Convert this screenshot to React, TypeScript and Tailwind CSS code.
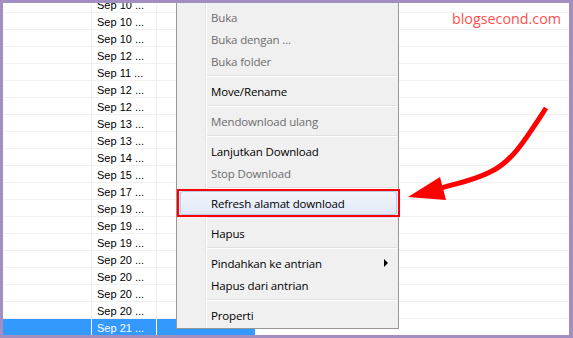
import React from "react";

const dates = [
  "Sep 10", "Sep 10", "Sep 10", "Sep 12", "Sep 11", "Sep 12", "Sep 12",
  "Sep 13", "Sep 13", "Sep 14", "Sep 15", "Sep 17", "Sep 19", "Sep 19",
  "Sep 19", "Sep 20", "Sep 20", "Sep 20", "Sep 20", "Sep 21",
];

type Entry =
  | { kind: "item"; label: string; disabled?: boolean; sub?: boolean; hot?: boolean }
  | { kind: "sep" };

const menu: Entry[] = [
  { kind: "item", label: "Buka", disabled: true },
  { kind: "item", label: "Buka dengan ...", disabled: true },
  { kind: "item", label: "Buka folder", disabled: true },
  { kind: "sep" },
  { kind: "item", label: "Move/Rename" },
  { kind: "sep" },
  { kind: "item", label: "Mendownload ulang", disabled: true },
  { kind: "sep" },
  { kind: "item", label: "Lanjutkan Download" },
  { kind: "item", label: "Stop Download", disabled: true },
  { kind: "sep" },
  { kind: "item", label: "Refresh alamat download", hot: true },
  { kind: "sep" },
  { kind: "item", label: "Hapus" },
  { kind: "sep" },
  { kind: "item", label: "Pindahkan ke antrian", sub: true },
  { kind: "item", label: "Hapus dari antrian" },
  { kind: "sep" },
  { kind: "item", label: "Properti" },
];

export default function App() {
  return (
    <div className="w-[573px] h-[338px] bg-[#a28ec0] pt-[3px] pl-[3px]">
      <div className="relative w-[566px] h-[332px] bg-white overflow-hidden">
        {/* list */}
        <div className="-mt-[7px] font-['Liberation_Sans',sans-serif] text-[11px]">
          {dates.map((d, i) => {
            const sel = i === dates.length - 1;
            return (
              <div key={i} className="flex h-[17px] border-b border-[#f0f0f0]">
                <div
                  className={`w-[89px] border-r ${sel ? "bg-[#3399ff] border-white" : "border-[#f0f0f0]"}`}
                />
                <div
                  className={`w-[65px] border-r pl-[5px] leading-[18px] ${sel ? "bg-[#3399ff] border-white text-white" : "border-[#f0f0f0] text-black"}`}
                >
                  {d} ...
                </div>
                <div className={`w-[98px] ${sel ? "bg-[#3399ff]" : ""}`} />
              </div>
            );
          })}
        </div>

        {/* watermark */}
        <div className="absolute left-[449px] top-[6px] font-['Open_Sans',sans-serif] text-[14.3px] leading-[20px] text-[#ff4f4f]">
          blogsecond.com
        </div>

        {/* context menu */}
        <div className="absolute left-[173px] top-[-1px] w-[223px] h-[327px] border border-[#979797] bg-[#f0f0f0] pt-[3px] font-['Open_Sans',sans-serif] text-[11.5px] tracking-[-0.15px]">
          <div className="absolute left-[28px] top-0 bottom-0 w-px bg-[#e2e3e3]" />
          <div className="absolute left-[29px] top-0 bottom-0 w-px bg-white" />
          {menu.map((e, i) =>
            e.kind === "sep" ? (
              <div key={i} className="relative h-[8px] flex flex-col justify-center pl-[30px] pr-[1px]">
                <div className="h-px bg-[#e0e0e0]" />
                <div className="h-px bg-white" />
              </div>
            ) : (
              <div key={i} className="relative h-[22px]">
                {e.hot && (
                  <>
                    <div className="absolute left-[3px] right-[1px] top-[-1px] bottom-[-1px] rounded-[3px] border border-[#b4cef0] bg-gradient-to-b from-[#f1f5fb] to-[#e2eaf6]" />
                    <div className="absolute left-0 w-[223px] top-[-3px] h-[28px] border-2 border-[#ff0000]" />
                  </>
                )}
                <div
                  className={`relative h-[22px] flex items-center pl-[34px] pt-px ${e.disabled ? "text-[#6d6d6d]" : "text-black"}`}
                >
                  {e.label}
                </div>
                {e.sub && (
                  <svg className="absolute left-[207px] top-[7px]" width="4" height="8" viewBox="0 0 4 8">
                    <path d="M0 0 L4 4 L0 8 Z" fill="#000" />
                  </svg>
                )}
              </div>
            )
          )}
        </div>

        {/* red arrow annotation */}
        <svg className="absolute left-[-3px] top-[-3px] pointer-events-none" width="573" height="338" viewBox="0 0 573 338">
          <path d="M546 108 C 525 140, 512 162, 490 172 C 475 180, 458 183, 438 189" fill="none" stroke="#ff0000" strokeWidth="5" />
          <path d="M408 197 L440 177 L446 200 Z" fill="#ff0000" />
        </svg>
      </div>
    </div>
  );
}
